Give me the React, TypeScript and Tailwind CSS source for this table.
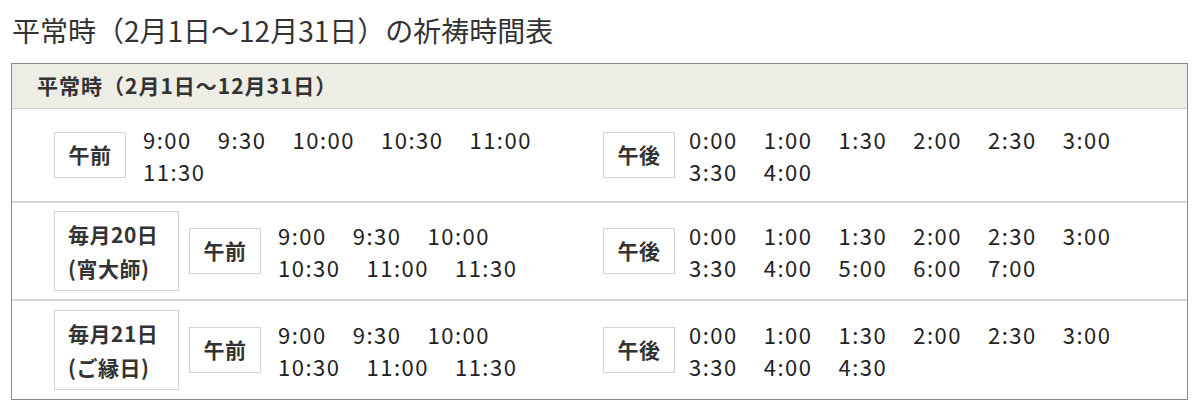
import React from "react";

type Row = {
  day?: [string, string];
  am: string[][];
  pm: string[][];
  h: string;
};

const rows: Row[] = [
  {
    am: [["9:00", "9:30", "10:00", "10:30", "11:00"], ["11:30"]],
    pm: [["0:00", "1:00", "1:30", "2:00", "2:30", "3:00"], ["3:30", "4:00"]],
    h: "h-[94px]",
  },
  {
    day: ["毎月20日", "(宵大師)"],
    am: [["9:00", "9:30", "10:00"], ["10:30", "11:00", "11:30"]],
    pm: [["0:00", "1:00", "1:30", "2:00", "2:30", "3:00"], ["3:30", "4:00", "5:00", "6:00", "7:00"]],
    h: "h-[98px]",
  },
  {
    day: ["毎月21日", "(ご縁日)"],
    am: [["9:00", "9:30", "10:00"], ["10:30", "11:00", "11:30"]],
    pm: [["0:00", "1:00", "1:30", "2:00", "2:30", "3:00"], ["3:30", "4:00", "4:30"]],
    h: "h-[98px]",
  },
];

function Label({ text }: { text: string }) {
  return (
    <div className="flex h-[46px] w-[72px] shrink-0 items-center justify-center border border-[#d4d4d4] text-[21px] font-bold tracking-[0.5px] text-[#333]">
      {text}
    </div>
  );
}

function Times({ lines }: { lines: string[][] }) {
  return (
    <div className="flex flex-col text-[22px] leading-[32px] tracking-[1.5px] text-[#222]">
      {lines.map((line, i) => (
        <div key={i} className="flex gap-x-[26px] whitespace-nowrap">
          {line.map((t, j) => (
            <span key={j}>{t}</span>
          ))}
        </div>
      ))}
    </div>
  );
}

export default function App() {
  return (
    <div className="h-[415px] w-[1200px] bg-white font-['Noto_Sans_CJK_JP','Noto_Sans',sans-serif] text-[#333]">
      <h2 className="pl-[12px] pt-[13px] text-[28px] font-normal leading-[35px] text-[#333]">
        平常時（2月1日〜12月31日）の祈祷時間表
      </h2>
      <div className="ml-[11px] mr-[12px] mt-[15px] border border-[#8a8a8a]">
        <div className="flex h-[45px] items-center border-b border-[#cfcfcf] bg-[#edece5] pl-[25px] text-[21px] font-bold tracking-[1px] text-[#333]">
          平常時（2月1日〜12月31日）
        </div>
        {rows.map((r, i) => (
          <div
            key={i}
            className={`flex items-center ${r.h} ${i < rows.length - 1 ? "border-b-2 border-[#d6d6d6]" : ""}`}
          >
            <div className="flex w-[591px] shrink-0 items-center pl-[42px]">
              {r.day && (
                <div className="mr-[10px] flex w-[125px] shrink-0 flex-col border border-[#d4d4d4] py-[5px] pl-[13px] text-[21px] font-bold leading-[34px] tracking-[0.5px] text-[#333]">
                  <span>{r.day[0]}</span>
                  <span>{r.day[1]}</span>
                </div>
              )}
              <Label text="午前" />
              <div className="ml-[17px]">
                <Times lines={r.am} />
              </div>
            </div>
            <div className="flex items-center">
              <Label text="午後" />
              <div className="ml-[14px]">
                <Times lines={r.pm} />
              </div>
            </div>
          </div>
        ))}
      </div>
    </div>
  );
}
